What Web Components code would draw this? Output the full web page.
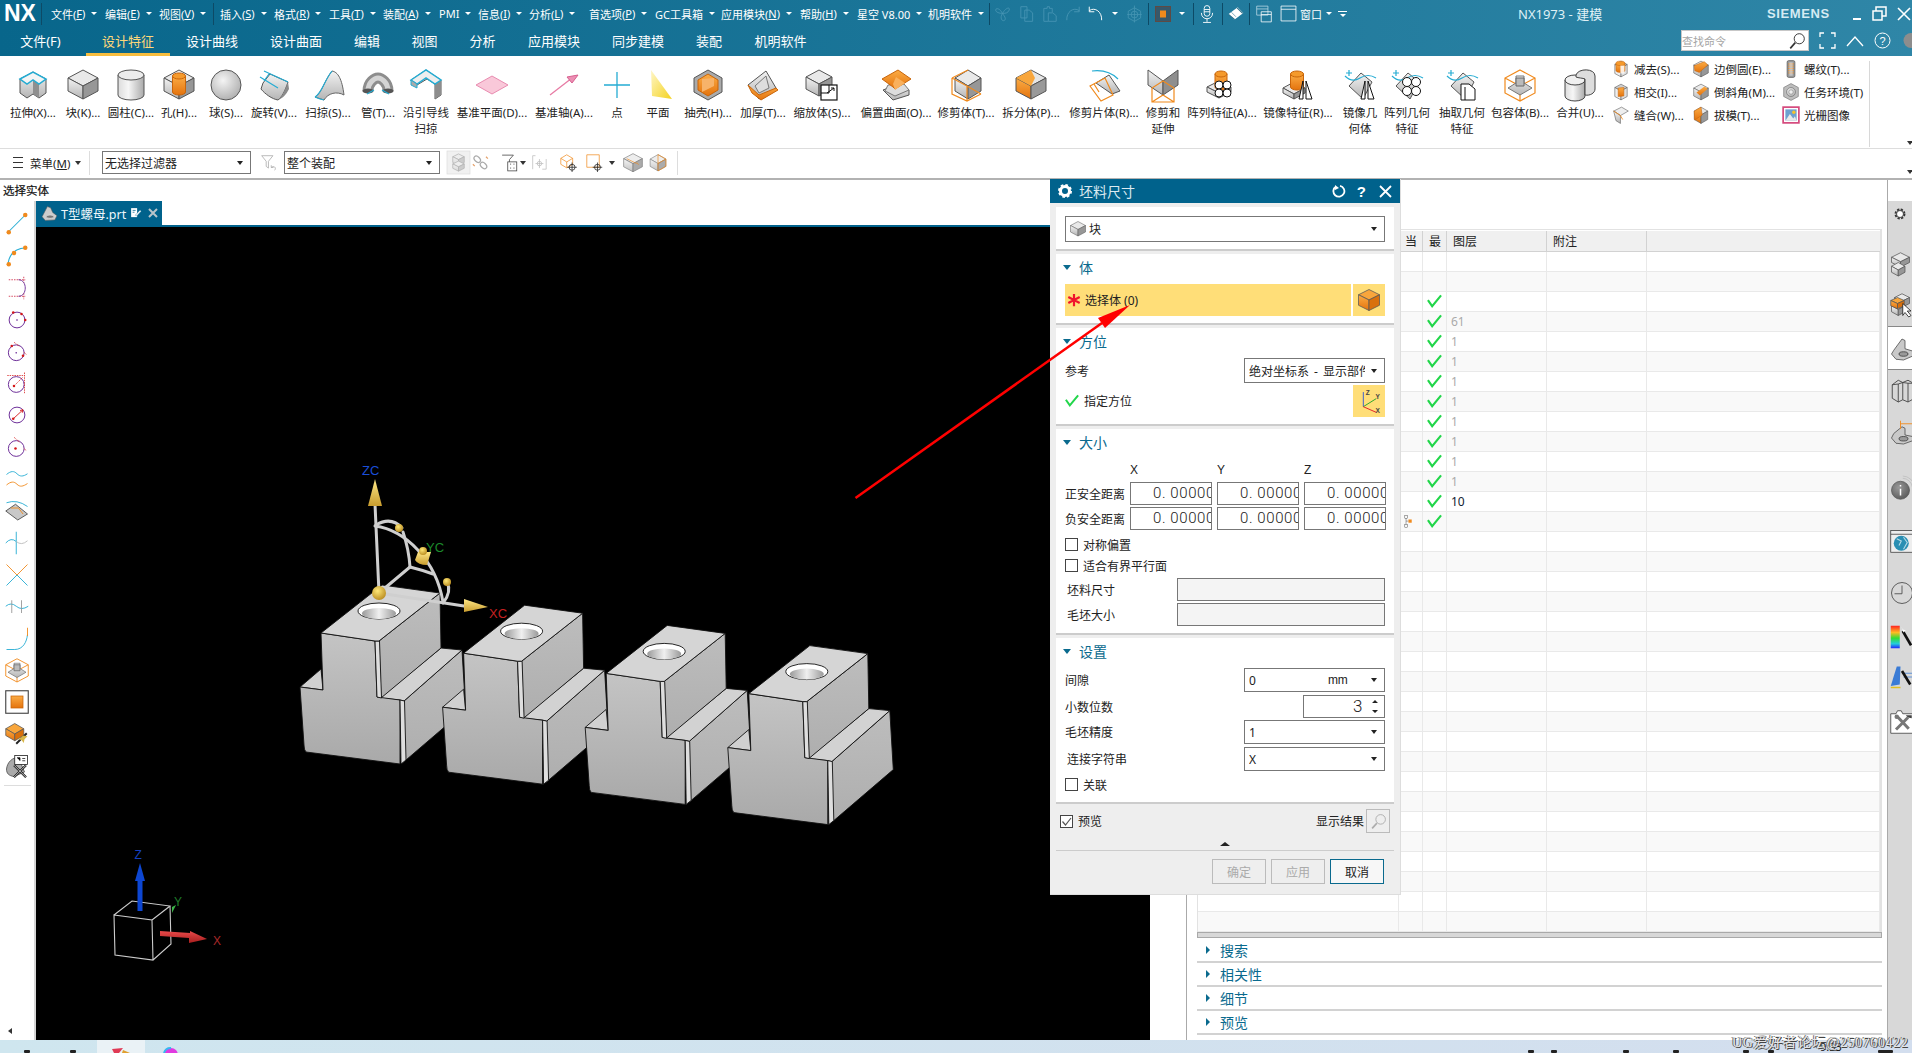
<!DOCTYPE html>
<html lang="zh">
<head>
<meta charset="utf-8">
<title>NX1973 - 建模</title>
<style>
  html, body { margin: 0; padding: 0; background: #fff; overflow: hidden; }
  body { font: 11px "Noto Sans", "Noto Sans CJK SC", sans-serif; color: #222; }
</style>
</head>
<body>
<nx-app></nx-app>
<script>
const cube = (cx, t, r, d, h, a = "#e9e9e9", b = "url(#g)", c = "#979797") =>
  `<g stroke="#555" stroke-linejoin="round"><path d="M${cx} ${t}L${cx + r} ${t + d}L${cx} ${t + 2 * d}L${cx - r} ${t + d}Z" fill="${a}"/><path d="M${cx - r} ${t + d}L${cx} ${t + 2 * d}V${t + 2 * d + h}L${cx - r} ${t + d + h}Z" fill="${b}"/><path d="M${cx + r} ${t + d}L${cx} ${t + 2 * d}V${t + 2 * d + h}L${cx + r} ${t + d + h}Z" fill="${c}"/></g>`;
const orangeCube = (cx, t, r, d, h) => cube(cx, t, r, d, h, "#f8a63c", "url(#o)", "#d9700c");
const cyl = (cx, t, r, ry, h, fill = "url(#o)", top = "#f59a2c", line = "#c9650a") =>
  `<path d="M${cx - r} ${t}V${t + h}A${r} ${ry} 0 0 0 ${cx + r} ${t + h}V${t}Z" fill="${fill}" stroke="${line}"/><ellipse cx="${cx}" cy="${t}" rx="${r}" ry="${ry}" fill="${top}" stroke="${line}"/>`;
const wire = (d, c = "#f08a1d") => `<path d="${d}" fill="none" stroke="${c}" stroke-width="1.2"/>`;
const cyan = d => wire(d, "#25acd3");
const sheet = `<path d="M5 17L17 4L28 13L19 30Z" fill="url(#g)" stroke="#555"/>`;
const sheetWave = cyan("M1 7Q8 14 16 9T32 9") + cyan("M5 1V7M2 4H8");
const rings = (x, y, r) => [[0, 0], [2 * r, 0], [0, 2 * r], [2 * r, 2 * r]].map(p => `<circle cx="${x + p[0]}" cy="${y + p[1]}" r="${r}" fill="#fff" stroke="#111"/>`).join("");
const tris = `<path d="M17 30L21 12V30ZM24 12L30 30H24Z" fill="#fff" stroke="#111"/>`;
const redDot = (x, y) => `<circle cx="${x}" cy="${y}" r="1.7" fill="#d51818"/>`;
const purple = (cx, cy) => `<circle cx="${cx}" cy="${cy}" r="10.5" fill="none" stroke="#6a2a96" stroke-width="1.3"/>`;

const ICONS = {
  extrude: `<path d="M3 10V24L10 29L16 25L22 29L29 24V10L16 3Z" fill="url(#g)" stroke="#555"/><path d="M16 11L22 15V29L16 25Z" fill="#8f8f8f"/><path d="M3 10L16 3L29 10L22 15L16 11L10 15Z" fill="#f5f5f5" stroke="#25acd3" stroke-width="1.5"/>`,
  block: cube(16, 1, 15, 8, 13),
  cylinder: cyl(16, 6, 13, 5, 20, "url(#h)", "#ececec", "#555"),
  hole: cube(16, 1, 15, 8, 13) + cyl(16, 7, 6.5, 3, 16),
  sphere: `<ellipse cx="16" cy="16" rx="15" ry="15" fill="url(#r)" stroke="#555"/>`,
  revolve: `<path d="M5 14L12 5L30 13C27 22 24 28 20 31C14 30 7 25 3 20Z" fill="url(#g)" stroke="#555"/><path d="M20 31C24 28 27 22 30 13L31 20C28 26 25 29 20 31Z" fill="#8a8a8a"/>` + cyan("M2 8L20 19M6 2L30 13M11 5L6 12"),
  sweep: `<path d="M3 28C10 24 12 12 20 2C26 3 30 10 32 26C25 22 16 24 12 31Z" fill="url(#g)" stroke="#666"/>` + cyan("M3 28C10 24 12 12 20 2M12 31C7 30 5 29 3 28"),
  tube: `<path d="M6 22C6 13 13 9 16 9S26 13 26 22" fill="none" stroke="#8d8d8d" stroke-width="11"/><path d="M6 22C6 13 13 9 16 9S26 13 26 22" fill="none" stroke="#d4d4d4" stroke-width="5"/><ellipse cx="6" cy="22" rx="5.500" ry="2.500" fill="#555"/><ellipse cx="26" cy="22" rx="5.500" ry="2.500" fill="#555"/>` + cyan("M5 25L12 21M20 21L27 25"),
  guide: `<path d="M1 11L16 1L31 11V26L25 30V15L17 10L7 16L1 12Z" fill="url(#g)" stroke="#555"/><path d="M25 15V30L31 26V11Z" fill="#8d8d8d"/><path d="M1 11L16 1L31 11L25 15L16 9L7 15Z" fill="#eee" stroke="#25acd3" stroke-width="1.5"/><path d="M1 11V16L7 19V15Z" fill="#aaa" stroke="#25acd3"/>`,
  dplane: `<path d="M0 16L16 7L32 16L16 25Z" fill="#f9c8d9" stroke="#e98bb0"/>`,
  daxis: `<path d="M2 26L24 9" stroke="#e77ba4" stroke-width="1.3"/><path d="M30 6L19 8L24 14Z" fill="#ec90b4" stroke="#d8608f"/>`,
  point: `<path d="M16 3V29M3 16H29" stroke="#25acd3" stroke-width="1.3"/>`,
  plane: `<path d="M9 1L30 30L10 27Z" fill="url(#y)"/>`,
  shell: `<path d="M16 1L30 9V23L16 31L2 23V9Z" fill="#aaa" stroke="#555"/><path d="M16 5L26 11V21L16 27L6 21V11Z" fill="url(#o)" stroke="#c9650a"/><path d="M10 10L22 9V17L10 23Z" fill="#f7b36a"/>`,
  thicken: `<path d="M1 16L19 2L29 19L12 30Z" fill="url(#g)" stroke="#555"/><path d="M1 16L5 24L14 31L31 21L29 19L12 26Z" fill="url(#o)" stroke="#c9650a"/><path d="M8 17L19 7L22 19L12 24Z" fill="#ddd" stroke="#777"/>`,
  scale: cube(13, 1, 13, 7, 12) + `<rect x="15" y="16" width="16" height="15" fill="#fff" stroke="#111" stroke-width="1.2"/><path d="M15 24H23V16M21 24L28 19M25 19H28V22" fill="none" stroke="#111"/>`,
  offset: `<path d="M3 21L19 15L29 21L29 26L13 31Z" fill="url(#g)" stroke="#555"/><path d="M8 16L5 22L15 27L29 21L24 15Z" fill="#ddd" stroke="#777"/><path d="M2 10L18 1L31 10L15 20L13 18Z" fill="url(#o)" stroke="#c9650a"/><path d="M16 8L25 14L15 21L13 15Z" fill="#f9b05c"/>`,
  trim: cube(18, 1, 13, 8, 13) + wire("M2 9L18 1M2 9V25L17 32L31 25M2 9L17 17V32M31 25L17 17"),
  split: cube(16, 1, 15, 8, 13, "#e5e5e5", "url(#o)", "#999") + `<path d="M16 1L1 9L16 17L20 9Z" fill="#f8a63c"/>`,
  tsheet: `<path d="M8 14L21 6L32 22L24 25Z" fill="url(#g)" stroke="#555"/>` + wire("M2 17L17 9L25 26L13 32ZM6 15L11 23") + cyan("M4 2Q20 0 30 10"),
  trimext: `<path d="M1 1L16 12V26L1 16Z" fill="url(#g)" stroke="#555"/><path d="M31 1L16 12V26L31 16Z" fill="#8e8e8e" stroke="#555"/>` + wire("M16 12L5 19V33H27V19ZM5 33L16 26L27 33"),
  pattern: cube(13, 12, 12, 6, 5) + cyl(15, 5, 6, 3, 13) + rings(13, 16, 4),
  mirror: cube(12, 13, 11, 6, 5) + cyl(15, 5, 6.500, 3, 13) + tris,
  mirrorgeo: sheet + sheetWave + tris,
  patgeo: sheet + sheetWave + rings(16, 13, 4.500),
  extract: sheet + sheetWave + `<path d="M15 15H23L29 20V31H15Z" fill="#fff" stroke="#111"/><path d="M19 18V31" stroke="#111"/>`,
  bound: wire("M16 1L31 9V24L16 32L1 24V9ZM1 9L16 17L31 9M16 17V32") + `<path d="M4 19L12 14V7H20V14L28 19L16 26Z" fill="url(#g)" stroke="#777"/><path d="M12 9H20V17H12Z" fill="#bbb" stroke="#666"/>`,
  unite: cyl(11, 11, 10, 5, 16, "url(#h)", "#f0f0f0", "#444") + `<path d="M12 6C14 -1 31 -1 31 7V20C31 24 26 27 21 26V10C19 9 14 9 12 8Z" fill="#ddd" stroke="#444"/>`,
  subtract: cube(16, 2, 11, 6, 16, "#ccc", "#eee", "#ddd") + cyl(15, 6, 8, 4, 12) + `<path d="M15 10h7v14h-7z" fill="#fff" opacity=".85"/>`,
  intersect: cube(16, 2, 11, 6, 16, "#ccc", "#eee", "#ddd") + `<path d="M11 9L21 8V23L11 24Z" fill="url(#o)" stroke="#c9650a"/>`,
  sew: `<path d="M3 9L17 2L29 9L15 17Z" fill="#eee" stroke="#555"/><path d="M3 9L15 17V31L7 26Z" fill="url(#g)" stroke="#555"/><path d="M3 9L15 17L19 24" fill="none" stroke="#f08a1d" stroke-width="1.5"/>`,
  eblend: cube(16, 2, 13, 7, 14) + `<path d="M4 10L22 3L28 9L13 22L5 19Z" fill="url(#o)" stroke="#c9650a"/>`,
  chamfer: cube(16, 2, 13, 7, 14) + `<path d="M8 17L22 6L28 10L14 22Z" fill="url(#o)"/>`,
  draft: cube(16, 2, 12, 7, 15, "#e5e5e5", "url(#o)", "#979797") + `<path d="M4 9L16 2L18 16L5 25Z" fill="url(#o)" stroke="#c9650a"/>`,
  thread: `<rect x="9" y="1" width="14" height="30" rx="3" fill="#999" stroke="#444"/><path d="M11 7H21M11 11H21M11 15H21M11 19H21M11 23H21" stroke="#f08a1d" stroke-width="1.5"/><rect x="13" y="4" width="6" height="24" fill="#eee" opacity=".5"/>`,
  env: `<path d="M16 1L29 8V24L16 31L3 24V8Z" fill="#bdbdbd" stroke="#666"/><circle cx="16" cy="16" r="8" fill="url(#r)" stroke="#666"/><circle cx="16" cy="16" r="4" fill="#eee" stroke="#777"/>`,
  raster: `<rect x="2" y="2" width="28" height="28" fill="#fff" stroke="#d4487c" stroke-width="3"/><rect x="6" y="6" width="20" height="20" fill="#6fa0cf"/><path d="M6 26L14 14L20 22L23 18L26 26Z" fill="#e8e8e8"/><circle cx="21" cy="11" r="3" fill="#f6c22b"/>`,

  fan: `<g fill="none" stroke="#4896b4" stroke-width="1.5"><path d="M15 15C10 5 3 5 3 9S10 15 15 15ZM15 15C22 3 29 4 27 9S21 15 15 15ZM15 15C9 25 16 30 19 27S18 19 15 15Z"/></g>`,
  copy: `<g fill="none" stroke="#4896b4" stroke-width="1.5"><path d="M5 3H16V23H5ZM12 9H20L26 14V29H12Z"/></g>`,
  paste: `<g fill="none" stroke="#4896b4" stroke-width="1.5"><path d="M5 6H11V3H15V6H20V13M5 6V29H13M13 14H21L27 19V29H13Z"/></g>`,
  redo: `<path d="M27 10C17 3 4 12 5 27M27 3V12H18" fill="none" stroke="#4896b4" stroke-width="1.6"/>`,
  undo: `<path d="M4 10C14 3 27 12 26 27M4 3V12H13" fill="none" stroke="#fff" stroke-width="1.7"/>`,
  cross: `<g fill="none" stroke="#4896b4" stroke-width="1.4"><path d="M4 11L15 5L26 11V23L15 29L4 23Z"/><path d="M15 1V31M2 17H28"/><circle cx="15" cy="17" r="6"/></g>`,
  bbox: `<rect x="1" y="1" width="30" height="30" fill="#37586a" stroke="#5e4a44" stroke-width="2"/><rect x="10" y="9" width="12" height="14" fill="#f08a1d"/>`,
  mic: `<g fill="none" stroke="#fff" stroke-width="1.6"><rect x="11" y="1" width="10" height="19" rx="5"/><path d="M6 14C6 28 26 28 26 14M16 24V30M9 31H23M11 8H21M11 12H21"/></g>`,
  brush: `<path d="M3 16L19 4L29 14L13 26Z" fill="#fff"/><path d="M18 5L28 15M3 17L14 26" stroke="#2a6f8b" stroke-width="2"/><path d="M8 13l8 8" stroke="#2a6f8b"/>`,
  win1: `<g fill="none" stroke="#b8d8e4" stroke-width="1.4"><path d="M3 2H23V18H3ZM3 7H23"/><path d="M11 12H29V30H11ZM11 17H29" stroke="#fff"/></g>`,
  win2: `<g fill="none" stroke="#fff" stroke-width="1.5"><path d="M2 2H30V30H2ZM2 8H30"/></g>`,
  search: `<g fill="none" stroke="#333" stroke-width="1.7"><circle cx="20" cy="12" r="9"/><path d="M13 19L4 29" stroke-width="3"/></g>`,
  filterback: `<g fill="none" stroke="#aaa" stroke-width="1.4"><path d="M3 3H23L15 13V25L11 22V13Z"/><path d="M20 24C24 20 30 24 26 29M20 20V24H24"/></g>`,
  disabledcube: `<rect x="0" y="0" width="32" height="32" fill="#f1f1f1" stroke="#ddd"/><g opacity=".4">${cube(16, 4, 8, 4, 8)}${cube(16, 14, 8, 4, 6)}</g>`,
  chain: `<g fill="none" stroke="#aaa" stroke-width="2"><ellipse cx="10" cy="10" rx="6" ry="4" transform="rotate(45 10 10)"/><ellipse cx="20" cy="20" rx="6" ry="4" transform="rotate(45 20 20)"/><path d="M3 18l3 3M24 6l3 3" stroke="#e5a16a"/></g>`,
  fdoc: `<g fill="none" stroke="#444" stroke-width="1.4"><path d="M2 2H22L15 10V20"/><rect x="12" y="14" width="16" height="16" fill="#fff"/><path d="M16 18h2M22 18h2M16 25h2M22 25h2"/></g>`,
  sel1: `<g fill="none" stroke="#bbb" stroke-width="1.3"><path d="M3 3V27M3 3H8M27 9V27H20"/><path d="M15 9V25M8 17H22"/><circle cx="15" cy="17" r="4"/></g>`,
  sel2: wire("M3 9L13 3L23 9V19L13 25L3 19ZM3 9L13 15L23 9M13 15V25") + `<g fill="none" stroke="#222" stroke-width="1.3"><circle cx="22" cy="24" r="5"/><path d="M22 16V32M14 24H30"/></g>`,
  sel3: wire("M3 3H24V24H3Z") + `<g fill="none" stroke="#222" stroke-width="1.3"><circle cx="21" cy="24" r="5"/><path d="M21 16V32M13 24H29"/></g>`,
  wcube: `<g opacity=".8">${cube(16, 1, 15, 8, 13)}</g><path d="M6 9L22 17M22 15l3 4" stroke="#f08a1d"/>`,
  wcube2: `<g opacity=".8">${cube(16, 1, 14, 8, 13)}</g>` + wire("M16 1L30 9V22L16 30Z M16 17L30 9"),
  gear: `<circle cx="16" cy="16" r="10" fill="none" stroke="#333" stroke-width="5" stroke-dasharray="5 2.900"/><circle cx="16" cy="16" r="8" fill="#fff" stroke="#333" stroke-width="2"/>`,
  part: `<path d="M2 22L12 3L18 5L22 14L30 20L26 28L8 29Z" fill="#ccc" stroke="#555"/><ellipse cx="17" cy="22" rx="7" ry="3" fill="#777" stroke="#eee"/>`,
  doc: `<path d="M3 3H19V27H3Z" fill="#fff"/><path d="M7 9H15M7 14H12" stroke="#00628c" stroke-width="2"/><path d="M14 22L27 8L30 11L18 24Z" fill="#fff" stroke="#00628c"/>`,
  orange: orangeCube(16, 2, 14, 7, 14),
  csys: `<g fill="none" stroke-width="1.2"><path d="M9 23V5" stroke="#3b5fd0"/><path d="M9 23L25 13" stroke="#2aa82a"/><path d="M9 23L25 30" stroke="#e2222a"/></g><g font-family="Liberation Sans" font-size="8" font-weight="700" fill="#444"><text x="12" y="9">Z</text><text x="24" y="14">Y</text><text x="24" y="31">X</text></g>`,
  tree: `<g fill="none" stroke="#333"><rect x="2" y="1" width="7" height="7"/><rect x="2" y="23" width="7" height="7"/><path d="M5 8V23M5 15H11"/></g><rect x="11" y="11" width="8" height="8" fill="#f08a1d"/>`,
  check: `<path d="M2 13L11 26L30 3" fill="none" stroke="#21d64a" stroke-width="4.500"/>`,
  star: `<g stroke="#f0142c" stroke-width="5"><path d="M16 2V30M3 9L29 23M29 9L3 23"/></g>`,

  line: `<path d="M4 27L27 4" stroke="#25acd3" stroke-width="1.4"/><circle cx="5" cy="27" r="3" fill="#f08a1d"/><circle cx="27" cy="4" r="3" fill="#f08a1d"/>`,
  arc3: `<path d="M4 28C5 14 14 6 28 5" fill="none" stroke="#25acd3" stroke-width="1.4"/><circle cx="5" cy="27" r="3" fill="#f08a1d"/><circle cx="12" cy="12" r="3" fill="#f08a1d"/><circle cx="27" cy="5" r="3" fill="#f08a1d"/>`,
  arcbox: `<path d="M5 5H27M5 27H27M25 1V9M25 23V31" stroke="#c8102e" stroke-dasharray="2 1.500"/><path d="M18 5C30 5 30 27 18 27" fill="none" stroke="#6a2a96" stroke-width="1.2"/>`,
  c1: purple(16, 16) + `<path d="M16 15v2M15 16h2" stroke="#6a2a96"/>` + redDot(11, 6) + redDot(22, 8) + redDot(27, 16),
  c2: purple(15, 17) + `<path d="M15 16v2M14 17h2" stroke="#6a2a96"/>` + redDot(9, 8) + redDot(24, 21) + `<path d="M12 3L20 9M25 16L29 20" stroke="#d51818" stroke-dasharray="1.500 1"/>`,
  c3: purple(15, 18) + redDot(12, 20) + `<path d="M12 20L24 8M3 6H26M26 2V30" stroke="#d51818" stroke-dasharray="2 1.200"/>`,
  c4: purple(16, 16) + redDot(11, 21) + `<path d="M11 21L24 9M24 9l-4 1M24 9l-1 4" stroke="#d51818" stroke-width="1.2"/>`,
  c5: purple(15, 18) + redDot(14, 18) + `<path d="M12 3L20 10M25 18L29 21" stroke="#d51818" stroke-dasharray="1.500 1"/>`,
  waves: cyan("M2 10C8 5 12 5 16 9S24 13 30 9") + wire("M2 24C8 19 12 19 16 23S24 26 30 22"),
  surfcurve: `<path d="M1 16L14 7L30 20L17 28Z" fill="#c8c8c8" stroke="#333"/>` + cyan("M2 5Q16 0 30 10") + wire("M8 12L18 12L24 20"),
  intcurve: cyan("M15 1V31M1 16Q8 8 15 14") + `<path d="M15 14Q22 20 30 13" fill="none" stroke="#bbb" stroke-width="1.2"/>`,
  xcross: cyan("M2 30L16 16L30 30") + wire("M2 2L16 16L30 2"),
  ticks: cyan("M1 15Q8 9 15 15T31 15") + `<path d="M9 7V24M22 7V24" stroke="#999" stroke-width="1.2"/>`,
  bridge: cyan("M2 30H13C24 30 29 20 30 10") + wire("M30 1V12"),
  boxsq: `<rect x="1" y="1" width="30" height="30" fill="#fff" stroke="#444" stroke-width="1.5"/><rect x="8" y="8" width="16" height="16" fill="url(#o)" stroke="#c9650a"/>`,
  wand: orangeCube(13, 2, 12, 7, 9) + `<path d="M15 29L29 15" stroke="#222" stroke-width="2.500"/><path d="M24 18l6 1-4 4-1 5-3-4-5-1 4-2Z" fill="#d9b84a"/>`,
  pmi: `<path d="M2 20C3 11 10 4 18 5L26 24L12 30C5 29 2 26 2 20Z" fill="#aaa" stroke="#444"/><rect x="13" y="2" width="17" height="12" fill="#fff" stroke="#111"/><path d="M16 5h4v4M23 6h4M23 9h4" stroke="#111"/><path d="M12 31L28 15M12 15L28 31" stroke="#111" stroke-width="3"/><path d="M12 31L28 15M12 15L28 31" stroke="#fff"/>`,

  sideblock: cube(14, 1, 12, 6, 7) + cube(11, 14, 9, 5, 8),
  sideorange: cube(16, 1, 10, 5, 8) + cube(11, 12, 9, 5, 8) + orangeCube(10, 6, 9, 4, 7) + `<path d="M17 14V30L20 26L25 32L28 30L23 24H28Z" fill="#fff" stroke="#111"/>`,
  sidepart: `<path d="M2 24L5 19L16 4L20 6V17L30 20L32 26L18 32L8 31Z" fill="#c9c9c9" stroke="#444"/><ellipse cx="18" cy="24" rx="6" ry="3" fill="#999" stroke="#333"/>`,
  books: `<g fill="none" stroke="#444" stroke-width="1.2"><path d="M3 9L11 3L17 6V29L11 32L3 27ZM11 8V32M17 6L24 3L31 7V28L24 32L17 29M24 7V32M3 9L11 8L17 6M17 6L24 7L31 7"/></g>`,
  sidedim: `<path d="M2 24L5 18L16 9L20 11V20L30 22L32 27L18 32L8 31Z" fill="#c9c9c9" stroke="#444"/><ellipse cx="18" cy="25" rx="6" ry="3" fill="#999" stroke="#333"/>` + wire("M14 1V12M14 5H31M31 1V20"),
  info: `<circle cx="14" cy="19" r="12" fill="url(#d)" stroke="#555"/><path d="M14 17V26M14 12V14" stroke="#fff" stroke-width="2"/><path d="M17 3A14 14 0 0 1 30 15M17 0A17 17 0 0 1 33 14" fill="none" stroke="#bbb"/>`,
  browser: `<rect x="1" y="2" width="31" height="29" fill="#eee" stroke="#333"/><path d="M1 7H32" stroke="#333"/><circle cx="15" cy="19" r="10" fill="#2a8fb3"/><path d="M9 13L15 16L12 22M18 11L23 18L18 27" stroke="#b7dbe7" stroke-width="1.5" fill="none"/>`,
  clock: `<circle cx="16" cy="16" r="14" fill="none" stroke="#444" stroke-width="1.1"/><path d="M16 6V17H6" fill="none" stroke="#444" stroke-width="1.1"/>`,
  rainbow: `<rect x="1" y="1" width="12" height="30" fill="url(#rb)"/><path d="M17 8L28 27" stroke="#111" stroke-width="3.500"/><path d="M15 2l2 4 4 1-3 3" fill="#fff"/>`,
  bluewand: `<path d="M1 28L9 2H14L13 26Z" fill="#3a7bd5"/><path d="M1 30H14" stroke="#e0c020" stroke-width="2"/><path d="M16 11H32M18 16H32" stroke="#3a7bd5"/><path d="M16 8L27 26" stroke="#111" stroke-width="3.500"/>`,
  tools: `<path d="M1 5H8L10 1H15L17 5H32V31H1Z" fill="#fff" stroke="#333"/><path d="M8 26L24 10M10 9L25 25" stroke="#777" stroke-width="4"/><path d="M21 7H29V11L24 10Z" fill="#444"/><circle cx="9" cy="9" r="3" fill="#777"/>`,
};

const iconDefs = `<defs>
  <linearGradient id="g" x1="0" y1="0" x2="0" y2="1"><stop offset="0" stop-color="#f3f3f3"/><stop offset="1" stop-color="#b4b4b4"/></linearGradient>
  <linearGradient id="h" x1="0" y1="0" x2="1" y2="0"><stop offset="0" stop-color="#dcdcdc"/><stop offset=".4" stop-color="#f6f6f6"/><stop offset="1" stop-color="#aaa"/></linearGradient>
  <linearGradient id="o" x1="0" y1="0" x2="0" y2="1"><stop offset="0" stop-color="#fbac45"/><stop offset="1" stop-color="#e4730d"/></linearGradient>
  <linearGradient id="y" x1="0" y1="0" x2="1" y2="1"><stop offset="0" stop-color="#fff7c8"/><stop offset="1" stop-color="#f4d21f"/></linearGradient>
  <linearGradient id="rb" x1="0" y1="0" x2="0" y2="1"><stop offset="0" stop-color="#f22"/><stop offset=".3" stop-color="#fb2"/><stop offset=".55" stop-color="#3d3"/><stop offset=".8" stop-color="#2cd"/><stop offset="1" stop-color="#22f"/></linearGradient>
  <radialGradient id="r" cx=".4" cy=".35" r=".75"><stop offset="0" stop-color="#f4f4f4"/><stop offset="1" stop-color="#a9a9a9"/></radialGradient>
  <radialGradient id="d" cx=".4" cy=".35" r=".75"><stop offset="0" stop-color="#999"/><stop offset="1" stop-color="#555"/></radialGradient>
</defs>`;

class NxIcon extends HTMLElement {
  connectedCallback() {
    const s = this.getAttribute("size") || 32;
    this.attachShadow({ mode: "open" }).innerHTML = `
      <style>:host{display:inline-block;width:${s}px;height:${s}px;flex:none;line-height:0}svg{overflow:visible}</style>
      <svg width="${s}" height="${s}" viewBox="0 0 32 32">${iconDefs}${ICONS[this.getAttribute("name")] || ""}</svg>`;
  }
}
customElements.define("nx-icon", NxIcon);

class NxHeader extends HTMLElement {
  constructor() {
    super();
    const menus = [["文件", "F", 54], ["编辑", "E", 54], ["视图", "V", 54, 1], ["插入", "S", 54], ["格式", "R", 55], ["工具", "T", 54], ["装配", "A", 56], ["PMI", "", 39], ["信息", "I", 51], ["分析", "L", 60], ["首选项", "P", 66], ["GC工具箱", "", 66], ["应用模块", "N", 79], ["帮助", "H", 57], ["星空 V8.00", "", 71], ["机明软件", "", 61]];
    const menuHtml = menus.map(m => `<span class="m" style="width:${m[2]}px">${m[0]}${m[1] ? `(<u>${m[1]}</u>)` : ""}<i></i></span>${m[3] ? '<b class="sep" style="margin-right:6px"></b>' : ""}`).join("");
    const tabs = [["文件(F)", 20, 41], ["设计特征", 86, 84, 1], ["设计曲线", 186, 52], ["设计曲面", 270, 52], ["编辑", 354, 26], ["视图", 411, 27], ["分析", 469, 27], ["应用模块", 528, 52], ["同步建模", 612, 52], ["装配", 696, 26], ["机明软件", 754, 53]];
    let pos = 0;
    const tabHtml = tabs.map(t => {
      const gap = t[1] - pos;
      pos = t[1] + t[2];
      return `<span class="t${t[3] ? " on" : ""}" style="margin-left:${gap}px;width:${t[2]}px">${t[0]}</span>`;
    }).join("");
    const ic = (n, w, s = 18) => `<span class="q" style="width:${w}px"><nx-icon name="${n}" size="${s}"></nx-icon></span>`;
    const ar = w => `<span class="q" style="width:${w}px"><span class="ar"></span></span>`;
    this.attachShadow({ mode: "open" }).innerHTML = `
      <style>
        :host{display:block;height:56px;background:linear-gradient(90deg,#08668b,#2f86a7);color:#fff;position:relative}
        .row{display:flex;align-items:center;height:27px;white-space:nowrap}
        .logo{font:700 23px "Liberation Sans",sans-serif;width:37px;padding-left:4px;flex:none}
        .sep{display:block;width:1px;height:22px;background:#0d4a66;flex:none}
        .m{display:flex;align-items:center;font-size:11px;flex:none}
        .m i{border:3px solid transparent;border-top:3px solid #fff;border-bottom:0;margin-left:6px}
        .q{display:flex;justify-content:center;flex:none}
        .ar{border:3px solid transparent;border-top:3px solid #fff;border-bottom:0;flex:none}
        .title{position:absolute;left:1518px;top:4px;font-size:13px;color:#dff0f6}
        .siemens{position:absolute;left:1767px;top:6px;font:700 13px "Liberation Sans",sans-serif;letter-spacing:.6px;color:#d5ebf3}
        .ctl{position:absolute;top:0;left:1852px;height:27px;display:flex;align-items:center;gap:10px}
        .tabs{display:flex;height:29px;font-size:13px;white-space:nowrap}
        .t{display:flex;justify-content:center;align-items:center;height:26px;flex:none}
        .t.on{color:#ffd87a;box-shadow:0 3px 0 #f7bd3e}
        .find{position:absolute;left:1681px;top:30px;width:128px;height:21px;box-sizing:border-box;background:#fff;border:1px solid #c7c7c7;color:#a5a5a5;font-size:11px;display:flex;align-items:center;justify-content:space-between;padding-right:2px}
        .tools{position:absolute;left:1819px;top:30px;display:flex;align-items:center;height:21px;gap:10px}
      </style>
      <div class="row">
        <span class="logo">NX</span><b class="sep" style="margin-right:9px"></b>
        ${menuHtml}
        <b class="sep"></b>
        ${ic("fan", 26)}${ic("copy", 22)}${ic("paste", 24)}${ic("redo", 22)}${ic("undo", 24)}${ar(14)}${ic("cross", 26)}
        <b class="sep"></b>
        ${ic("bbox", 28, 16)}${ar(10)}<span style="width:6px"></span><b class="sep"></b>
        ${ic("mic", 25)}<span style="width:3px"></span><b class="sep"></b>
        ${ic("brush", 26)}<b class="sep"></b>
        ${ic("win1", 28)}${ic("win2", 20, 17)}
        <span style="margin-left:2px;width:24px">窗口</span>${ar(10)}
        <span style="margin-left:4px;width:9px;height:6px;border-top:1px solid #fff;display:flex;justify-content:center;margin-top:2px"><span class="ar" style="margin-top:2px"></span></span>
      </div>
      <span class="title">NX1973 - 建模</span>
      <span class="siemens">SIEMENS</span>
      <div class="ctl">
        <svg width="10" height="12"><path d="M1 11H9" stroke="#fff" stroke-width="2"/></svg>
        <svg width="15" height="15"><path d="M1 5H10V14H1ZM4 5V1H14V10H10" fill="none" stroke="#fff" stroke-width="1.5"/></svg>
        <svg width="14" height="14"><path d="M1 1L13 13M13 1L1 13" stroke="#fff" stroke-width="1.6"/></svg>
      </div>
      <div class="tabs">${tabHtml}</div>
      <div class="find">查找命令<nx-icon name="search" size="18"></nx-icon></div>
      <div class="tools">
        <svg width="17" height="17"><path d="M1 5V1H5M12 1H16V5M16 12V16H12M5 16H1V12" fill="none" stroke="#fff" stroke-width="1.3"/></svg>
        <svg width="18" height="12"><path d="M1 11L9 2L17 11" fill="none" stroke="#fff" stroke-width="1.3"/></svg>
        <svg width="17" height="17"><circle cx="8.500" cy="8.500" r="7.500" fill="none" stroke="#fff"/><text x="5.500" y="13" fill="#fff" font-size="11" font-family="Liberation Sans">?</text></svg>
        <svg width="17" height="17" style="margin-left:1px"><circle cx="9" cy="8.500" r="7.500" fill="#8d8d8d"/></svg>
      </div>`;
  }
}
customElements.define("nx-header", NxHeader);

class NxRibbon extends HTMLElement {
  constructor() {
    super();
    const items = [["extrude", "拉伸(X)...", 33], ["block", "块(K)...", 83], ["cylinder", "圆柱(C)...", 131], ["hole", "孔(H)...", 179], ["sphere", "球(S)...", 226], ["revolve", "旋转(V)...", 274], ["sweep", "扫掠(S)...", 328], ["tube", "管(T)...", 378], ["guide", "沿引导线<br>扫掠", 426], ["dplane", "基准平面(D)...", 492], ["daxis", "基准轴(A)...", 564], ["point", "点", 617], ["plane", "平面", 658], ["shell", "抽壳(H)...", 708], ["thicken", "加厚(T)...", 763], ["scale", "缩放体(S)...", 822], ["offset", "偏置曲面(O)...", 896], ["trim", "修剪体(T)...", 966], ["split", "拆分体(P)...", 1031], ["tsheet", "修剪片体(R)...", 1104], ["trimext", "修剪和<br>延伸", 1163], ["pattern", "阵列特征(A)...", 1222], ["mirror", "镜像特征(R)...", 1298], ["mirrorgeo", "镜像几<br>何体", 1360], ["patgeo", "阵列几何<br>特征", 1407], ["extract", "抽取几何<br>特征", 1462], ["bound", "包容体(B)...", 1520], ["unite", "合并(U)...", 1580]];
    let left = 0;
    const html = items.map((it, i) => {
      const right = i < items.length - 1 ? (it[2] + items[i + 1][2]) / 2 : 1612;
      const w = right - left;
      const shift = it[2] - (left + right) / 2;
      left = right;
      return `<div class="b" style="width:${w}px"><div class="c" style="left:${shift}px"><nx-icon name="${it[0]}"></nx-icon><span>${it[1]}</span></div></div>`;
    }).join("");
    const small = [[80, [["subtract", "减去(S)..."], ["intersect", "相交(I)..."], ["sew", "缝合(W)..."]]], [90, [["eblend", "边倒圆(E)..."], ["chamfer", "倒斜角(M)..."], ["draft", "拔模(T)..."]]], [78, [["thread", "螺纹(T)..."], ["env", "任务环境(T)"], ["raster", "光栅图像"]]]];
    const smallHtml = small.map(col => `<div class="col" style="width:${col[0]}px">${col[1].map(r => `<div class="r"><nx-icon name="${r[0]}" size="18"></nx-icon>${r[1]}</div>`).join("")}</div>`).join("");
    this.attachShadow({ mode: "open" }).innerHTML = `
      <style>
        :host{display:flex;height:93px;box-sizing:border-box;border-bottom:1px solid #ddd;background:#fff;font-size:11.500px;color:#222;position:relative}
        .b{flex:none;display:flex;justify-content:center;padding-top:13px;box-sizing:border-box}
        .c{position:relative;display:flex;flex-direction:column;align-items:center;text-align:center;line-height:16px;white-space:nowrap}
        .c span{margin-top:4px}
        .col{flex:none;padding-top:1px;display:flex;flex-direction:column}
        .r{height:23px;display:flex;align-items:center;gap:4px;white-space:nowrap}
        .sep{position:absolute;left:1869px;top:5px;height:86px;width:1px;background:#d8d8d8}
        .more{position:absolute;left:1907px;top:85px;border:3px solid transparent;border-top:4px solid #333;border-bottom:0}
      </style>
      ${html}${smallHtml}
      <div class="sep"></div><div class="more"></div>`;
  }
}
customElements.define("nx-ribbon", NxRibbon);

class NxSelectionBar extends HTMLElement {
  constructor() {
    super();
    const arrow = `<i class="ar"></i>`;
    const combo = (w, t) => `<div class="cb" style="width:${w}px">${t}<i class="dn"></i></div>`;
    const ic = (n, ml, s = 20) => `<nx-icon name="${n}" size="${s}" style="margin-left:${ml}px"></nx-icon>`;
    this.attachShadow({ mode: "open" }).innerHTML = `
      <style>
        :host{display:flex;align-items:center;height:31px;box-sizing:border-box;padding-bottom:2px;border-bottom:2px solid #b2b2b2;background:#fff;font-size:11.500px;position:relative}
        .bars{margin-left:13px;width:10px;height:9px;border-top:1px solid #333;border-bottom:1px solid #333;position:relative;flex:none}
        .bars:after{content:"";position:absolute;left:0;right:0;top:3.500px;height:1px;background:#333}
        .ar{border:3px solid transparent;border-top:4px solid #333;border-bottom:0;display:block;flex:none}
        .sep{width:1px;height:24px;background:#ddd;flex:none}
        .cb{flex:none;height:23px;box-sizing:border-box;border:1px solid #777;display:flex;align-items:center;justify-content:space-between;padding:0 7px 0 2px;font-size:12px}
        .dn{border:3.500px solid transparent;border-top:4px solid #222;border-bottom:0;display:block}
      </style>
      <span class="bars"></span><span style="margin-left:7px;width:45px;flex:none">菜单(<u>M</u>)</span>${arrow}
      <span class="sep" style="margin:0 12px 0 8px"></span>
      ${combo(149, "无选择过滤器")}
      ${ic("filterback", 9, 18)}
      <span style="width:6px;flex:none"></span>
      ${combo(156, "整个装配")}
      ${ic("disabledcube", 7, 23)}
      ${ic("chain", 1, 20)}${ic("fdoc", 10, 18)}<i class="ar" style="margin-left:1px"></i>
      ${ic("sel1", 5, 18)}${ic("sel2", 10, 19)}${ic("sel3", 7, 19)}<i class="ar" style="margin-left:5px"></i>
      ${ic("wcube", 8, 20)}${ic("wcube2", 6, 18)}
      <span class="sep" style="margin-left:10px"></span>
      <i class="ar" style="position:absolute;left:1907px;top:21px"></i>`;
  }
}
customElements.define("nx-selection-bar", NxSelectionBar);

class NxLeftTools extends HTMLElement {
  constructor() {
    super();
    const names = ["line", "arc3", "arcbox", "c1", "c2", "c3", "c4", "c5", "waves", "surfcurve", "intcurve", "xcross", "ticks", "bridge", "bound", "boxsq", "wand", "pmi"];
    this.attachShadow({ mode: "open" }).innerHTML = `
      <style>
        :host{display:flex;flex-direction:column;width:36px;flex:none;box-sizing:border-box;border-right:2px solid #d4d4d4;align-items:center;background:#fff;padding-top:7px;position:relative}
        .i{height:31.900px;display:flex;align-items:center;justify-content:center;flex:none}
        hr{width:27px;border:0;border-top:1px solid #ddd;margin:3px 0 0}
        .b{position:absolute;left:8px;bottom:6px;border:3px solid transparent;border-right:4px solid #333;border-left:0}
      </style>
      ${names.map(n => `<div class="i"><nx-icon name="${n}" size="24"></nx-icon></div>`).join("")}
      <hr><i class="b"></i>`;
  }
}
customElements.define("nx-left-tools", NxLeftTools);

class NxViewport extends HTMLElement {
  constructor() {
    super();
    const model = (dx, dy) => `<g transform="translate(${dx} ${dy})" stroke="#111" stroke-width=".9" stroke-linejoin="round">
      <path d="M404 701L462 650L465.500 709L406 760L401 764Z" fill="url(#vr)"/>
      <path d="M380 698L441 648L462 650L404 701L400 700Z" fill="#d2d2d2"/>
      <path d="M379 641L440 593L441 648L381 698Z" fill="url(#vr)"/>
      <path d="M300 687L321 669L323 690Z" fill="#d0d0d0"/>
      <path d="M321 633L375 641L377 697L400 700V764L306 752Q304 750 304 745L300 687L323 690Z" fill="url(#vf)"/>
      <path d="M375 641L379.500 641L381.500 698L377 697Z" fill="#dedede"/>
      <path d="M400 700L404.500 701L406 760L401 764Z" fill="#dedede"/>
      <path d="M321 633L382 585L440 593L379 641L375 641Z" fill="#d5d5d5"/>
      <ellipse cx="379" cy="611" rx="21" ry="8" fill="#fff"/>
      <ellipse cx="379" cy="613.500" rx="17" ry="5.500" fill="url(#vh)" stroke="none"/>
    </g>`;
    this.attachShadow({ mode: "open" }).innerHTML = `
      <style>
        :host{display:block;background:#000;flex:1;min-height:0;position:relative;overflow:hidden}
        svg{display:block;font-family:"Liberation Sans",sans-serif}
      </style>
      <svg width="1114" height="813" viewBox="36 227 1114 813">
        <defs>
          <linearGradient id="vf" x1="0" y1="0" x2="0" y2="1"><stop offset="0" stop-color="#c4c4c4"/><stop offset="1" stop-color="#a9a9a9"/></linearGradient>
          <linearGradient id="vr" x1="0" y1="0" x2="0" y2="1"><stop offset="0" stop-color="#bdbdbd"/><stop offset="1" stop-color="#aeaeae"/></linearGradient>
          <linearGradient id="vh" x1="0" y1="0" x2="1" y2="0"><stop offset="0" stop-color="#9a9a9a"/><stop offset=".5" stop-color="#f0f0f0"/><stop offset="1" stop-color="#9a9a9a"/></linearGradient>
          <linearGradient id="vy" x1="0" y1="0" x2="0" y2="1"><stop offset="0" stop-color="#ffe888"/><stop offset="1" stop-color="#c99d2e"/></linearGradient>
          <radialGradient id="vb" cx=".4" cy=".35" r=".7"><stop offset="0" stop-color="#ffe878"/><stop offset="1" stop-color="#b88a1e"/></radialGradient>
          <linearGradient id="vred" x1="0" y1="0" x2="0" y2="1"><stop offset="0" stop-color="#e84a4a"/><stop offset="1" stop-color="#a81e1e"/></linearGradient>
        </defs>
        ${model(0, 0)}${model(142.6, 20.2)}${model(285.2, 40.4)}${model(427.8, 60.6)}
        <g fill="none" stroke="#cfcfcf" stroke-width="3" stroke-linecap="round">
          <path d="M379 593L375 504"/>
          <path d="M379 593L464 606"/>
          <path d="M379 593L410 567"/>
          <path d="M375 526C405 530 436 560 443 602"/>
          <path d="M376 525Q391 516 402 528"/>
          <path d="M403 532Q409 550 410 567"/>
          <path d="M410 567Q422 570 433 574"/>
          <path d="M447 582Q452 592 443 603"/>
        </g>
        <path d="M375 479L382 506L368 506Z" fill="url(#vy)"/>
        <path d="M464 599L488 607L464 612Z" fill="url(#vy)"/>
        <path d="M431 552L427 565Q418 565 415 560L418 552L425 552Z" fill="url(#vy)"/>
        <circle cx="379" cy="593" r="7" fill="url(#vb)"/>
        <circle cx="399" cy="528" r="4" fill="url(#vb)"/>
        <circle cx="423" cy="551" r="4" fill="url(#vb)"/>
        <circle cx="447" cy="582" r="4" fill="url(#vb)"/>
        <text x="362" y="475" font-size="13" fill="#1a4ed8">ZC</text>
        <text x="426" y="552" font-size="13" fill="#1c8a2c">YC</text>
        <text x="489" y="618" font-size="13" fill="#c42020">XC</text>
        <g fill="none" stroke="#ccc" stroke-width="1.100">
          <path d="M114 915L152 920L153 960L115 955ZM114 915L132 901L170 906L152 920M170 906L171 944L153 960"/>
        </g>
        <path d="M137.500 911V881H135L140 863L145 881H142.500V911Z" fill="#0d46d2"/>
        <path d="M172 907L176 905L172 913Z" fill="#3cb548"/>
        <path d="M160 931L190 933V931L207 939L189 943V938L160 936Z" fill="url(#vred)"/>
        <text x="134.500" y="859" font-size="12" fill="#1540c0">Z</text>
        <text x="174" y="906" font-size="12" fill="#1f7a2a">Y</text>
        <text x="213" y="945" font-size="12" fill="#a82828">X</text>
      </svg>`;
  }
}
customElements.define("nx-viewport", NxViewport);

class NxGraphics extends HTMLElement {
  constructor() {
    super();
    this.attachShadow({ mode: "open" }).innerHTML = `
      <style>
        :host{display:flex;flex-direction:column;width:1150px;flex:none;background:#fff}
        .cue{height:21px;padding:3px 0 0 3px;box-sizing:border-box;font-size:11.500px;line-height:15px;color:#111;flex:none;-webkit-text-stroke:.2px #111}
        .main{display:flex;flex:1;min-height:0}
        .g{flex:1;display:flex;flex-direction:column;min-width:0}
        .tab{flex:none;width:127px;margin-left:-1px;height:24px;background:#00628c;color:#eef7fb;font-size:12.500px;display:flex;align-items:center;box-sizing:border-box;padding-left:6px;white-space:nowrap}
        .tab span{margin-left:3px;width:69px}
        .strip{height:2px;background:#00628c;flex:none}
      </style>
      <div class="cue">选择实体</div>
      <div class="main">
        <nx-left-tools></nx-left-tools>
        <div class="g">
          <div class="tab"><nx-icon name="part" size="17"></nx-icon><span>T型螺母.prt</span><nx-icon name="doc" size="12"></nx-icon><svg width="10" height="10" style="margin-left:6px"><path d="M1 1L9 9M9 1L1 9" stroke="#b9c4ca" stroke-width="2"/></svg></div>
          <div class="strip"></div>
          <nx-viewport></nx-viewport>
        </div>
      </div>`;
  }
}
customElements.define("nx-graphics", NxGraphics);

class NxTable extends HTMLElement {
  constructor() {
    super();
    const layers = { 3: "", 4: "61", 5: "1", 6: "1", 7: "1", 8: "1", 9: "1", 10: "1", 11: "1", 12: "1", 13: "10", 14: "" };
    const cols = "201px 24px 24px 100px 100px 1fr";
    let rows = "";
    for (let i = 1; i <= 34; i++) {
      const has = i in layers;
      const text = layers[i] || "";
      rows += `<div class="row${i % 2 ? "" : " alt"}">
        <span></span>
        <span class="c">${i === 14 ? '<nx-icon name="tree" size="13"></nx-icon>' : ""}</span>
        <span class="c">${has ? '<nx-icon name="check" size="15"></nx-icon>' : ""}</span>
        <span class="t${text === "10" ? " dark" : ""}">${text}</span>
        <span></span><span></span>
      </div>`;
    }
    this.attachShadow({ mode: "open" }).innerHTML = `
      <style>
        :host{display:block;height:703px;flex:none;box-sizing:border-box;border:1px solid #e2e2e2;border-bottom:0;border-right-width:2px;overflow:hidden;background:#fff;padding-top:1px}
        .row,.head{display:grid;grid-template-columns:${cols}}
        .head{height:21px;background:#f0f0f0;border-bottom:1px solid #d2d2d2;box-sizing:border-box;font-size:12px;line-height:22px}
        .head span{border-right:1px solid #d2d2d2;padding-left:6px;box-sizing:border-box}
        .row{height:20px;box-sizing:border-box;border-bottom:1px solid #e9e9e9;font-size:12px;line-height:19px}
        .row.alt{background:#f9f9f9}
        .row span{border-right:1px solid #e9e9e9;box-sizing:border-box}
        .c{display:flex;justify-content:center;align-items:center}
        .t{padding-left:4px;color:#aaa}
        .t.dark{color:#123}
      </style>
      <div class="head"><span></span><span>当</span><span>最</span><span>图层</span><span>附注</span><span style="border:0"></span></div>
      ${rows}`;
  }
}
customElements.define("nx-table", NxTable);

class NxCollapsed extends HTMLElement {
  constructor() {
    super();
    this.attachShadow({ mode: "open" }).innerHTML = `
      <style>
        :host{display:flex;align-items:center;height:24px;flex:none;box-sizing:border-box;border-bottom:2px solid #d2d2d2;color:#0a6a8e;font-size:14px;padding-left:9px}
        i{border:4px solid transparent;border-left:4px solid #0a6a8e;border-right:0;margin-right:10px;display:block}
      </style>
      <i></i><slot></slot>`;
  }
}
customElements.define("nx-collapsed", NxCollapsed);

class NxPanel extends HTMLElement {
  constructor() {
    super();
    this.attachShadow({ mode: "open" }).innerHTML = `
      <style>
        :host{display:flex;flex-direction:column;flex:none;width:702px;box-sizing:border-box;margin-left:36px;border-left:1px solid #aaa;border-right:1px solid #aaa;padding:49px 5px 0 10px;background:#fff}
        .split{height:6px;flex:none;background:#d8d8d8;border:1px solid #a9a9a9;box-sizing:border-box;margin:0 0 1px}
      </style>
      <nx-table></nx-table>
      <div class="split"></div>
      <nx-collapsed>搜索</nx-collapsed>
      <nx-collapsed>相关性</nx-collapsed>
      <nx-collapsed>细节</nx-collapsed>
      <nx-collapsed>预览</nx-collapsed>`;
  }
}
customElements.define("nx-panel", NxPanel);

class NxSidebar extends HTMLElement {
  constructor() {
    super();
    const items = [["gear", 214, 14], ["sideblock", 264, 24], ["sideorange", 305, 24], ["sidepart", 348, 24, 1], ["books", 390, 24], ["sidedim", 432, 24], ["info", 488, 24], ["browser", 541, 24], ["clock", 593, 24], ["rainbow", 637, 24], ["bluewand", 677, 24], ["tools", 722, 24]];
    let y = 201;
    const html = items.map(it => {
      const top = it[1] - it[2] / 2;
      if (it[3]) {
        const out = `<div class="on" style="margin-top:${326 - y}px"><nx-icon name="${it[0]}" size="${it[2]}"></nx-icon></div>`;
        y = 370;
        return out;
      }
      const out = `<nx-icon name="${it[0]}" size="${it[2]}" style="margin:${top - y}px 0 0 ${it[0] === "gear" ? 5 : 2}px"></nx-icon>`;
      y = top + it[2];
      return out;
    }).join("");
    this.attachShadow({ mode: "open" }).innerHTML = `
      <style>
        :host{display:block;width:24px;flex:none;margin-top:21px;background:#d8d8d8;box-sizing:border-box;overflow:hidden}
        .on{height:44px;width:24px;background:#fff;display:flex;align-items:center;padding-left:2px;box-sizing:border-box;border-top:1px solid #888;border-bottom:1px solid #888}
        nx-icon{display:block}
      </style>
      ${html}`;
  }
}
customElements.define("nx-sidebar", NxSidebar);

class NxCombo extends HTMLElement {
  constructor() {
    super();
    this.attachShadow({ mode: "open" }).innerHTML = `
      <style>
        :host{display:flex;align-items:center;box-sizing:border-box;height:25px;border:1px solid #777;background:#fff;font-size:12px;padding:0 7px 0 4px;gap:6px;overflow:hidden;word-spacing:2px}
        .t{flex:1;min-width:0;white-space:nowrap;overflow:hidden;display:flex;align-items:center}
        i{flex:none;border:3.500px solid transparent;border-top:4px solid #222;border-bottom:0;display:block}
      </style>
      <span class="t"><slot></slot></span><i></i>`;
  }
}
customElements.define("nx-combo", NxCombo);

class NxInput extends HTMLElement {
  constructor() {
    super();
    this.attachShadow({ mode: "open" }).innerHTML = `
      <style>
        :host{display:block;box-sizing:border-box;height:23px;border:1px solid #777;background:#fff;overflow:hidden;font:300 15px/21px Roboto,sans-serif;letter-spacing:.6px;padding-left:22px;color:#222}
        :host([empty]){background:#f4f4f4}
        slot{white-space:pre}
      </style>
      <slot></slot>`;
  }
}
customElements.define("nx-input", NxInput);

class NxCheck extends HTMLElement {
  constructor() {
    super();
    this.attachShadow({ mode: "open" }).innerHTML = `
      <style>
        :host{display:flex;align-items:center;height:21px;font-size:12px;gap:5px}
        b{width:13px;height:13px;box-sizing:border-box;border:1px solid #444;background:#fff;display:block;flex:none}
        svg{display:none}
        :host([checked]) svg{display:block}
      </style>
      <b><svg width="11" height="11"><path d="M1.500 5.500L4.500 9L10 2" fill="none" stroke="#555" stroke-width="1.200"/></svg></b><slot></slot>`;
  }
}
customElements.define("nx-check", NxCheck);

class NxSection extends HTMLElement {
  constructor() {
    super();
    const title = this.getAttribute("title");
    this.attachShadow({ mode: "open" }).innerHTML = `
      <style>
        :host{display:block;background:#fff;border-bottom:2px solid #ccc;padding:0 9px 7px}
        .h{height:30px;display:flex;align-items:center;color:#0a6a8e;font-size:14px;margin-left:-2px;padding-bottom:4px;box-sizing:border-box}
        .h i{border:4.500px solid transparent;border-top:5px solid #0a6a8e;border-bottom:0;margin-right:8px;display:block}
      </style>
      ${title ? `<div class="h"><i></i>${title}</div>` : ""}
      <slot></slot>`;
    this.removeAttribute("title");
  }
}
customElements.define("nx-section", NxSection);

class NxButton extends HTMLElement {
  constructor() {
    super();
    this.attachShadow({ mode: "open" }).innerHTML = `
      <style>
        :host{display:flex;align-items:center;justify-content:center;width:54px;height:25px;box-sizing:border-box;border:1px solid #bbb;color:#aaa;font-size:12px;background:#eee}
        :host([primary]){border-color:#0a6a8e;color:#222;background:#f7f7f7}
      </style>
      <slot></slot>`;
  }
}
customElements.define("nx-button", NxButton);

class NxDialog extends HTMLElement {
  constructor() {
    super();
    const inputs = `<nx-input>0. 00000</nx-input><nx-input>0. 00000</nx-input><nx-input>0. 00000</nx-input>`;
    this.attachShadow({ mode: "open" }).innerHTML = `
      <style>
        :host{position:absolute;left:1050px;top:179px;width:351px;height:716px;box-sizing:border-box;background:#eee;border-right:1px solid #ddd;border-bottom:1px solid #ddd;font-size:12px;display:flex;flex-direction:column}
        .title{height:24px;flex:none;background:#00628c;color:#dbeaf1;display:flex;align-items:center;font-size:14px;padding:0 8px;gap:7px}
        .title .sp{flex:1}
        .body{padding:4px 6px 0;display:flex;flex-direction:column;gap:3px}
        .sel{display:flex;gap:2px;height:32px}
        .sel .a{flex:1;background:#ffde78;display:flex;align-items:center;gap:4px;padding-left:2px;color:#222}
        .btn{width:32px;height:32px;background:#ffde78;display:flex;align-items:center;justify-content:center;flex:none}
        .row{display:flex;align-items:center;justify-content:space-between}
        .grid{display:grid;grid-template-columns:60px 82px 82px 82px;column-gap:5px;row-gap:2px;align-items:center;grid-template-rows:21px 23px 23px}
        .grid .ax{font:12px "Liberation Sans",sans-serif}
        .wide{display:flex;align-items:center;justify-content:space-between;height:25px}
        .lab{margin-left:2px}
        .foot{padding:2px 4px 0;height:24px;display:flex;align-items:center;justify-content:space-between;flex:none}
        .mag{width:24px;height:24px;box-sizing:border-box;border:1px solid #bbb;display:flex;align-items:center;justify-content:center}
        .up{align-self:center;margin-top:6px;border:5px solid transparent;border-bottom:4px solid #222;border-top:0;display:block}
        .btns{margin-top:1px;border-top:1px solid #ccc;padding:8px 10px 0 0;display:flex;justify-content:flex-end;gap:5px}
      </style>
      <div class="title">
        <svg width="14" height="14" viewBox="0 0 14 14"><circle cx="7" cy="7" r="4.500" fill="none" stroke="#fff" stroke-width="3"/><circle cx="7" cy="7" r="5.800" fill="none" stroke="#fff" stroke-width="2.400" stroke-dasharray="2.500 2"/></svg>
        <span>坯料尺寸</span><span class="sp"></span>
        <svg width="14" height="14"><path d="M4 2.500A5.500 5.500 0 1 0 8 1.800" fill="none" stroke="#fff" stroke-width="1.800"/><path d="M7 0V5L3 2Z" fill="#fff" transform="rotate(180 5 3)"/></svg>
        <span style="font:700 15px 'Liberation Sans';color:#fff;margin:0 6px 0 4px">?</span>
        <svg width="13" height="13"><path d="M1 1L12 12M12 1L1 12" stroke="#fff" stroke-width="1.800"/></svg>
      </div>
      <div class="body">
        <nx-section style="padding-top:9px"><nx-combo style="height:26px"><nx-icon name="block" size="16" style="margin-right:3px"></nx-icon>块</nx-combo></nx-section>
        <nx-section title="体">
          <div class="sel"><div class="a"><nx-icon name="star" size="14"></nx-icon><span>选择体 (0)</span></div><div class="btn"><nx-icon name="orange" size="24"></nx-icon></div></div>
        </nx-section>
        <nx-section title="方位">
          <div class="wide"><span>参考</span><nx-combo style="width:141px">绝对坐标系 - 显示部件</nx-combo></div>
          <div class="row" style="margin-top:2px;height:32px"><span style="display:flex;align-items:center;gap:5px"><nx-icon name="check" size="14"></nx-icon>指定方位</span><div class="btn"><nx-icon name="csys" size="26"></nx-icon></div></div>
        </nx-section>
        <nx-section title="大小">
          <div class="grid">
            <span></span><span class="ax">X</span><span class="ax">Y</span><span class="ax">Z</span>
            <span>正安全距离</span>${inputs}
            <span>负安全距离</span>${inputs}
          </div>
          <div style="height:4px"></div>
          <nx-check>对称偏置</nx-check>
          <nx-check>适合有界平行面</nx-check>
          <div class="wide" style="margin-top:2px;height:23px"><span class="lab">坯料尺寸</span><nx-input empty style="width:208px"></nx-input></div>
          <div class="wide" style="margin-top:2px;height:23px"><span class="lab">毛坯大小</span><nx-input empty style="width:208px"></nx-input></div>
        </nx-section>
        <nx-section title="设置">
          <div class="wide" style="height:24px"><span>间隙</span><nx-combo style="width:141px;height:24px">0<span style="margin-left:72px;font-family:'Liberation Sans'">mm</span></nx-combo></div>
          <div class="wide" style="height:23px;margin-top:3px"><span>小数位数</span>
            <nx-input style="width:82px;padding-left:49px;position:relative;font-size:17px">3<svg width="8" height="13" style="position:absolute;right:5px;top:4px"><path d="M4 0L7 3H1ZM4 13L7 10H1Z" fill="#222"/></svg></nx-input></div>
          <div class="wide" style="height:24px;margin-top:2px"><span>毛坯精度</span><nx-combo style="width:141px;height:24px">1</nx-combo></div>
          <div class="wide" style="height:24px;margin-top:3px"><span class="lab">连接字符串</span><nx-combo style="width:141px;height:24px">X</nx-combo></div>
          <nx-check style="margin-top:3px">关联</nx-check>
        </nx-section>
        <div class="foot"><nx-check checked>预览</nx-check><span style="display:flex;align-items:center;gap:2px">显示结果<span class="mag"><nx-icon name="search" size="17" style="opacity:.35"></nx-icon></span></span></div>
        <i class="up"></i>
        <div class="btns"><nx-button>确定</nx-button><nx-button>应用</nx-button><nx-button primary>取消</nx-button></div>
      </div>`;
  }
}
customElements.define("nx-dialog", NxDialog);

class NxAnnotation extends HTMLElement {
  constructor() {
    super();
    this.attachShadow({ mode: "open" }).innerHTML = `
      <style>:host{position:absolute;inset:0;pointer-events:none}svg{display:block}</style>
      <svg width="1912" height="1053"><path d="M855.500 498L1102 323" stroke="#f00" stroke-width="2.500"/><path d="M1130 305L1098 318L1105 328Z" fill="#f00"/></svg>`;
  }
}
customElements.define("nx-annotation", NxAnnotation);

class NxWatermark extends HTMLElement {
  constructor() {
    super();
    this.attachShadow({ mode: "open" }).innerHTML = `
      <style>
        :host{position:absolute;left:1732px;top:1034px;font:14px/18px "Liberation Serif","Noto Sans CJK SC",serif;color:#e4e4e4;letter-spacing:.6px;white-space:nowrap;text-shadow:1px 1px 0 #444,-1px 0 0 #666}
      </style>
      UG爱好者论坛@250760422`;
  }
}
customElements.define("nx-watermark", NxWatermark);

class NxTaskbar extends HTMLElement {
  constructor() {
    super();
    this.attachShadow({ mode: "open" }).innerHTML = `
      <style>
        :host{display:flex;height:13px;flex:none;background:linear-gradient(90deg,#cfe6ef,#d3deee);position:relative;overflow:hidden;align-items:flex-start}
        .d{flex:none;height:3px;background:#222;margin-top:10px;border-radius:1px}
        .tile{flex:none;width:48px;height:13px;margin-left:21px;background:#eaf2f6;display:flex;justify-content:center}
        .time{position:absolute;left:1820px;top:1px;font-size:11px;line-height:12px;color:#111}
      </style>
      <span class="d" style="margin-left:24px;width:6px"></span>
      <span class="d" style="margin-left:40px;width:6px"></span>
      <span class="tile"><svg width="22" height="13"><path d="M2 9L13 8L9 13H4Z" fill="#e03a55"/><path d="M13 10L20 13H12Z" fill="#e0a030"/></svg></span>
      <svg width="16" height="13" style="margin-left:18px;flex:none"><circle cx="8" cy="15" r="7" fill="#e03ae0"/><path d="M1 13A7 7 0 0 1 8 8" stroke="#38b6f0" stroke-width="2" fill="none"/></svg>
      <span class="d" style="margin-left:1349px;width:6px"></span>
      <span class="d" style="margin-left:17px;width:6px"></span>
      <span class="d" style="margin-left:66px;width:6px"></span>
      <span class="d" style="margin-left:44px;width:6px"></span>
      <span class="d" style="margin-left:64px;width:6px"></span>
      <span class="d" style="margin-left:19px;width:6px"></span>
      <span class="d" style="margin-left:104px;width:15px"></span>
      <span class="time">9:33</span>`;
  }
}
customElements.define("nx-taskbar", NxTaskbar);

class NxApp extends HTMLElement {
  constructor() {
    super();
    this.attachShadow({ mode: "open" }).innerHTML = `
      <style>
        :host{display:flex;flex-direction:column;width:1912px;height:1053px;position:relative;overflow:hidden;background:#fff}
        .work{flex:1;min-height:0;display:flex}
      </style>
      <nx-header></nx-header>
      <nx-ribbon></nx-ribbon>
      <nx-selection-bar></nx-selection-bar>
      <div class="work">
        <nx-graphics></nx-graphics>
        <nx-panel></nx-panel>
        <nx-sidebar></nx-sidebar>
      </div>
      <nx-taskbar></nx-taskbar>
      <nx-dialog></nx-dialog>
      <nx-annotation></nx-annotation>
      <nx-watermark></nx-watermark>`;
  }
}
customElements.define("nx-app", NxApp);
</script>
</body>
</html>
